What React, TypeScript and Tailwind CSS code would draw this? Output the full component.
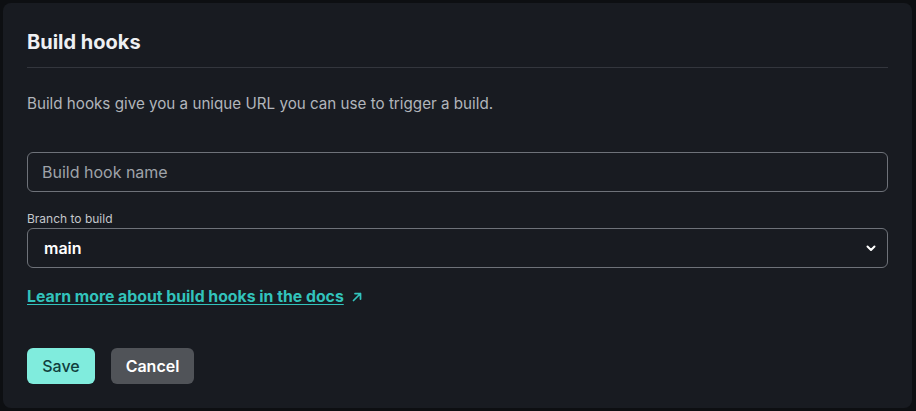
import React from "react";

export default function App() {
  return (
    <div className="w-[916px] h-[411px] bg-[#0d0f12] p-[3px]" style={{ fontFamily: "Inter, 'Noto Sans', sans-serif" }}>
      <div className="h-[405px] w-[909px] rounded-lg bg-[#181b21] px-6 pt-[25px]">
        <h2 className="text-[20px] leading-[28px] font-bold text-[#eef0f3]">Build hooks</h2>
        <div className="mt-[11px] h-px bg-[#33363d]" />
        <p className="mt-[25px] text-[15.2px] leading-[22px] text-[#b1b5bb]">
          Build hooks give you a unique URL you can use to trigger a build.
        </p>
        <div className="mt-[37px] flex h-10 items-center rounded-md border border-[#6e7279] bg-[#181b21] px-[14px]">
          <span className="text-[16px] text-[#9fa3a9]">Build hook name</span>
        </div>
        <div className="mt-[19px] text-[12px] leading-[16px] text-[#c4c7cc]">Branch to build</div>
        <div className="mt-[1px] flex h-10 items-center justify-between rounded-md border border-[#6e7279] bg-[#181b21] pl-[16px] pr-[10px]">
          <span className="text-[16px] font-semibold text-white">main</span>
          <svg width="12" height="12" viewBox="0 0 24 24" fill="none" stroke="white" strokeWidth="4" strokeLinecap="round" strokeLinejoin="round">
            <path d="M5 9l7 7 7-7" />
          </svg>
        </div>
        <div className="mt-[18px] flex items-center gap-[7px]">
          <a className="text-[15.8px] font-bold leading-[22px] text-[#32c3bc] underline underline-offset-2">
            Learn more about build hooks in the docs
          </a>
          <svg width="12" height="12" viewBox="0 0 24 24" fill="none" stroke="#32c3bc" strokeWidth="3.5" strokeLinecap="round" strokeLinejoin="round">
            <path d="M5 19L19 5M8 5h11v11" />
          </svg>
        </div>
        <div className="mt-[40px] flex gap-4">
          <button className="h-9 w-[68px] rounded-md bg-[#80ecdd] text-[16px] font-medium text-[#113f3d]">Save</button>
          <button className="h-9 w-[83px] rounded-md bg-[#505358] text-[16px] font-semibold text-white">Cancel</button>
        </div>
      </div>
    </div>
  );
}
